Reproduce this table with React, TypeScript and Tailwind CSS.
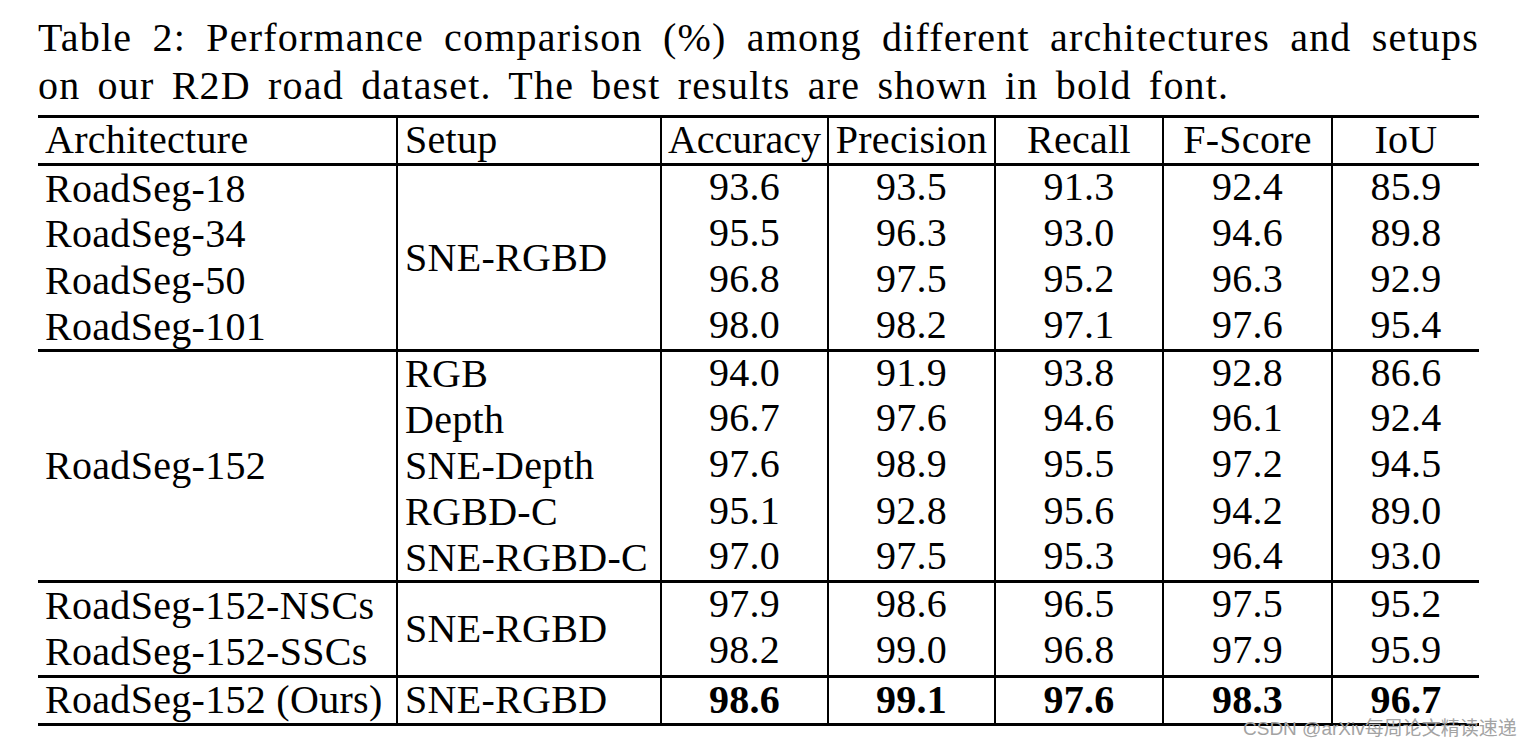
const groups = [
  {
    arch: ['RoadSeg-18', 'RoadSeg-34', 'RoadSeg-50', 'RoadSeg-101'],
    setup: ['SNE-RGBD'],
    rows: [
      ['93.6', '93.5', '91.3', '92.4', '85.9'],
      ['95.5', '96.3', '93.0', '94.6', '89.8'],
      ['96.8', '97.5', '95.2', '96.3', '92.9'],
      ['98.0', '98.2', '97.1', '97.6', '95.4'],
    ],
  },
  {
    arch: ['RoadSeg-152'],
    setup: ['RGB', 'Depth', 'SNE-Depth', 'RGBD-C', 'SNE-RGBD-C'],
    rows: [
      ['94.0', '91.9', '93.8', '92.8', '86.6'],
      ['96.7', '97.6', '94.6', '96.1', '92.4'],
      ['97.6', '98.9', '95.5', '97.2', '94.5'],
      ['95.1', '92.8', '95.6', '94.2', '89.0'],
      ['97.0', '97.5', '95.3', '96.4', '93.0'],
    ],
  },
  {
    arch: ['RoadSeg-152-NSCs', 'RoadSeg-152-SSCs'],
    setup: ['SNE-RGBD'],
    rows: [
      ['97.9', '98.6', '96.5', '97.5', '95.2'],
      ['98.2', '99.0', '96.8', '97.9', '95.9'],
    ],
  },
];

const best = ['98.6', '99.1', '97.6', '98.3', '96.7'];

const rowH = ['h-[46.5px]', 'h-[46.2px]', 'h-[47.5px]'];

export default function App() {
  return (
    <div className="relative w-[1531px] h-[750px] bg-white text-black font-['Liberation_Serif',serif] text-[40px] leading-[48px] pl-[38px] pt-[14px]">
      <div className="w-[1441px] tracking-[1.2px] [word-spacing:6px]">
        <p className="text-justify [text-align-last:justify]">
          Table 2: Performance comparison (%) among different architectures and setups
        </p>
        <p>on our R2D road dataset. The best results are shown in bold font.</p>
      </div>

      <table className="mt-[5px] w-[1441px] table-fixed border-collapse leading-[40px] tracking-[0.3px]">
        <colgroup>
          <col className="w-[359px]" />
          <col className="w-[264px]" />
          <col className="w-[167px]" />
          <col className="w-[167px]" />
          <col className="w-[168px]" />
          <col className="w-[169px]" />
          <col className="w-[147px]" />
        </colgroup>
        <thead>
          <tr className="h-[48px] border-t-[3px] border-b-[3px] border-black">
            <th className="font-normal text-left pl-[7px] border-r-2 border-black p-0 pb-[2px]">Architecture</th>
            <th className="font-normal text-left pl-[7px] border-r-2 border-black p-0 pb-[2px]">Setup</th>
            <th className="font-normal text-center border-r-2 border-black p-0 pb-[2px] whitespace-nowrap tracking-normal">Accuracy</th>
            <th className="font-normal text-center border-r-2 border-black p-0 pb-[2px]">Precision</th>
            <th className="font-normal text-center border-r-2 border-black p-0 pb-[2px]">Recall</th>
            <th className="font-normal text-center border-r-2 border-black p-0 pb-[2px]">F-Score</th>
            <th className="font-normal text-center p-0 pb-[2px]">IoU</th>
          </tr>
        </thead>
        <tbody>
          {groups.map((g, gi) =>
            g.rows.map((r, ri) => (
              <tr
                key={`${gi}-${ri}`}
                className={`${rowH[gi]} ${ri === g.rows.length - 1 ? 'border-b-[3px] border-black' : ''}`}
              >
                {g.arch.length === 1 ? (
                  ri === 0 && (
                    <td rowSpan={g.rows.length} className="pl-[7px] border-r-2 border-black align-middle p-0">
                      {g.arch[0]}
                    </td>
                  )
                ) : (
                  <td className="pl-[7px] border-r-2 border-black p-0">{g.arch[ri]}</td>
                )}
                {g.setup.length === 1 ? (
                  ri === 0 && (
                    <td rowSpan={g.rows.length} className="pl-[7px] border-r-2 border-black align-middle p-0">
                      {g.setup[0]}
                    </td>
                  )
                ) : (
                  <td className="pl-[7px] border-r-2 border-black p-0 whitespace-nowrap">{g.setup[ri]}</td>
                )}
                {r.map((v, vi) => (
                  <td key={vi} className={`text-center p-0 pb-[3px] ${vi < 4 ? 'border-r-2 border-black' : ''}`}>
                    {v}
                  </td>
                ))}
              </tr>
            ))
          )}
          <tr className="h-[48px] border-b-[3px] border-black leading-[34px]">
            <td className="pl-[7px] border-r-2 border-black p-0 whitespace-nowrap">RoadSeg-152 (Ours)</td>
            <td className="pl-[7px] border-r-2 border-black p-0">SNE-RGBD</td>
            {best.map((v, vi) => (
              <td key={vi} className={`text-center font-bold p-0 ${vi < 4 ? 'border-r-2 border-black' : ''}`}>
                {v}
              </td>
            ))}
          </tr>
        </tbody>
      </table>

      <div className="absolute left-[1243px] top-[721px] font-['Liberation_Sans','Noto_Sans_CJK_SC',sans-serif] text-[19px] leading-[16px] text-[#a3a3a3] whitespace-nowrap">
        CSDN @arXiv每周论文精读速递
      </div>
    </div>
  );
}
